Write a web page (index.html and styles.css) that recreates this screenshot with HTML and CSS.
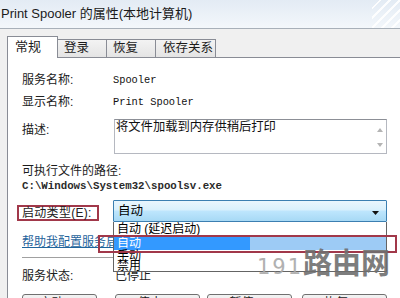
FILE: index.html
```html
<!DOCTYPE html>
<html lang="zh-CN">
<head>
<meta charset="utf-8">
<title>Print Spooler 的属性</title>
<link rel="stylesheet" href="styles.css">
</head>
<body>
<div class="screen">
  <div class="titlebar">Print Spooler 的属性(本地计算机)</div>
  <div class="tabs">
    <div class="tab active">常规</div>
    <div class="tab">登录</div>
    <div class="tab">恢复</div>
    <div class="tab wide">依存关系</div>
  </div>
  <div class="panel">
    <div class="row r1"><span class="label">服务名称:</span><span class="mono">Spooler</span></div>
    <div class="row r2"><span class="label">显示名称:</span><span class="mono">Print Spooler</span></div>
    <div class="row r3">
      <span class="label desc-label">描述:</span>
      <div class="desc">将文件加载到内存供稍后打印
        <svg class="sarrow up" width="6" height="4" viewBox="0 0 6 4"><path d="M0 4 L3 0 L6 4 Z" fill="#b4b4b4"/></svg>
        <svg class="sarrow down" width="6" height="4" viewBox="0 0 6 4"><path d="M0 0 L6 0 L3 4 Z" fill="#b4b4b4"/></svg>
      </div>
    </div>
    <div class="pathlabel">可执行文件的路径:</div>
    <div class="path">C:\Windows\System32\spoolsv.exe</div>
    <div class="row r6">
      <span class="label startup"><span class="hl">启动类型(E):</span></span>
      <div class="combo">自动
        <svg class="carrow" width="7" height="4" viewBox="0 0 7 4"><path d="M0 0 L7 0 L3.5 4 Z" fill="#111"/></svg>
      </div>
    </div>
    <div class="link">帮助我配置服务启动选项。</div>
    <div class="sep"></div>
    <div class="row r8"><span class="label">服务状态:</span><span class="status">已停止</span></div>
    <div class="buttons">
      <div class="btn b1">启动(S)</div>
      <div class="btn b2">停止(T)</div>
      <div class="btn b3">暂停(P)</div>
      <div class="btn b4">恢复(R)</div>
    </div>
  </div>

  <div class="droplist">
    <div class="it it1">自动 (延迟启动)</div>
    <div class="it it2">自动</div>
    <div class="it it3">手动</div>
    <div class="it it4">禁用</div>
  </div>
  <div class="redbox"></div>
  <div class="watermark"><span class="num">191</span><span class="cn">路由网</span></div>
</div>
</body>
</html>
```
FILE: styles.css
```css
html, body {
  margin: 0;
  padding: 0;
  width: 400px;
  height: 298px;
  overflow: hidden;
  background: #f0f0f0;
  font-family: "Liberation Sans", "Noto Sans CJK SC", sans-serif;
  color: #1c1c1c;
}

.screen {
  position: relative;
  width: 400px;
  height: 298px;
  overflow: hidden;
}

.titlebar {
  height: 28px;
  line-height: 28px;
  font-size: 13px;
  padding-left: 1px;
  white-space: nowrap;
  color: #1b1b1b;
  border-bottom: 1px solid #a8b0b9;
  background:
    repeating-linear-gradient(135deg, rgba(255,255,255,0) 0 5px, rgba(255,255,255,0.9) 5px 7px) right top / 28px 28px no-repeat,
    linear-gradient(#e3ebf4, #f3f7fb);
}

.tabs {
  display: flex;
  align-items: flex-end;
  height: 21px;
  margin-top: 7px;
  padding-left: 7px;
}

.tab {
  box-sizing: border-box;
  height: 18px;
  width: 50px;
  margin-left: -1px;
  padding-left: 6px;
  font-size: 12.5px;
  line-height: 16px;
  border: 1px solid #898c95;
  border-bottom: none;
  background: linear-gradient(#f3f3f3, #e4e4e4);
  white-space: nowrap;
}

.tab.active {
  position: relative;
  z-index: 1;
  margin-left: 0;
  width: 51px;
  height: 22px;
  margin-bottom: -1px;
  padding-top: 2px;
  padding-left: 7px;
  font-size: 13px;
  background: #fff;
}

.tab.wide {
  width: 61px;
  padding-left: 7px;
}

.panel {
  margin-left: 7px;
  height: 300px;
  background: #fff;
  border-top: 1px solid #898c95;
  border-left: 1px solid #898c95;
  padding-left: 14px;
  font-size: 12px;
}

.row {
  display: grid;
  grid-template-columns: 91px 274px;
  line-height: 16px;
}

.label {
  font-size: 12px;
  color: #202020;
}

.mono {
  font-family: "Liberation Mono", monospace;
  font-size: 10.35px;
  color: #111;
}

.r1 { margin-top: 14px; }
.r2 { margin-top: 6px; }
.r3 { margin-top: 9px; }

.desc-label { padding-top: 3px; }

.desc {
  position: relative;
  box-sizing: border-box;
  width: 273px;
  height: 35px;
  margin-left: 1px;
  border: 1px solid #b5b8c0;
  border-top-color: #8c8f96;
  padding-left: 1px;
  font-size: 12.3px;
  line-height: 15px;
  color: #111;
}

.sarrow {
  position: absolute;
  left: 262px;
}
.sarrow.up { top: 8px; }
.sarrow.down { top: 23px; }

.pathlabel {
  margin-top: 10px;
  line-height: 15px;
  font-size: 12px;
}

.path {
  line-height: 14px;
  font-family: "Liberation Mono", monospace;
  font-size: 10.75px;
  font-weight: bold;
  color: #2a2a2a;
}

.r6 { margin-top: 7px; line-height: normal; }

.startup {
  padding-top: 5px;
}

.hl {
  display: inline-block;
  box-sizing: border-box;
  height: 16px;
  margin-left: -5px;
  padding: 0 5px 0 3px;
  line-height: 12px;
  border: 2px solid #a1384a;
  letter-spacing: 0.3px;
}

.combo {
  position: relative;
  box-sizing: border-box;
  height: 22px;
  border: 1px solid #3c7fb1;
  border-radius: 1px;
  background: linear-gradient(#eaf6fd 0%, #d9f0fc 45%, #bee6fd 50%, #a7d9f5 100%);
  padding-left: 4px;
  line-height: 20px;
  font-size: 12.5px;
  color: #000;
}

.carrow {
  position: absolute;
  right: 7px;
  top: 10px;
}

.link {
  margin-top: 12px;
  line-height: 16px;
  font-size: 12px;
  color: #1f649c;
  text-decoration: underline;
  white-space: nowrap;
}

.sep {
  margin-top: 7px;
  width: 365px;
  border-top: 1px solid #a0a0a0;
  border-bottom: 1px solid #fff;
}

.r8 { margin-top: 9px; }

.status { font-size: 12px; padding-left: 2px; }

.buttons {
  display: flex;
  margin-top: 10px;
}

.btn {
  box-sizing: border-box;
  height: 23px;
  width: 85px;
  border: 1px solid #707070;
  border-radius: 3px;
  background: linear-gradient(#f2f2f2, #ebebeb 50%, #dddddd 51%, #cfcfcf);
  font-size: 12px;
  line-height: 16px;
  text-align: center;
}
.b1 { width: 75px; }
.b2 { margin-left: 18px; }
.b3 { margin-left: 7px; }
.b4 { margin-left: 10px; }

/* open drop-down list overlay */
.droplist {
  position: absolute;
  left: 113px;
  top: 222px;
  width: 274px;
  height: 50px;
  box-sizing: border-box;
  border: 1px solid #646464;
  border-top: none;
  background: #fff;
  font-size: 12px;
  color: #000;
}

.it {
  padding-left: 3px;
  white-space: nowrap;
}
.it1 { height: 15px; line-height: 15px; }
.it2 {
  height: 13px;
  line-height: 13px;
  color: #fff;
  background: linear-gradient(to right, #3399ff 0, #3399ff 136px, #9dcbf5 136px);
}
.it3 { height: 10px; line-height: 12px; }
.it4 { height: 11px; line-height: 13px; }

.redbox {
  position: absolute;
  left: 98px;
  top: 235px;
  width: 299px;
  height: 18px;
  box-sizing: border-box;
  border: 2px solid #a1384a;
}

.watermark {
  position: absolute;
  left: 257px;
  top: 246px;
  display: flex;
  align-items: baseline;
  white-space: nowrap;
  opacity: 0.9;
}
.watermark .num {
  font-family: "DejaVu Sans", sans-serif;
  font-size: 21px;
  letter-spacing: 2px;
  color: #a9a9a9;
}
.watermark .cn {
  font-family: "Noto Sans CJK SC", sans-serif;
  font-weight: bold;
  font-size: 29px;
  line-height: 30px;
  color: #6f6f6f;
}
```
